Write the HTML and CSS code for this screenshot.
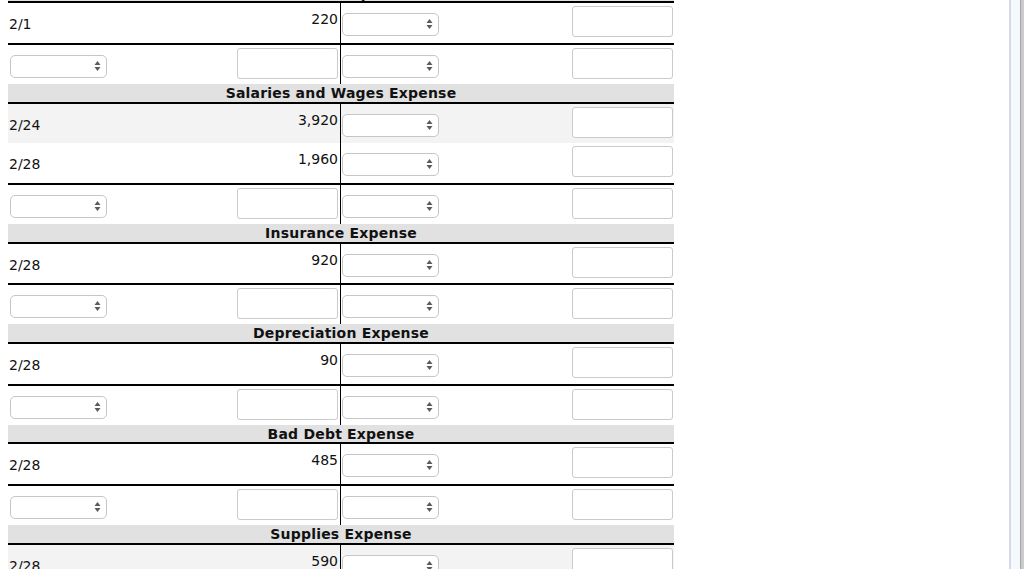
FILE: index.html
```html
<!DOCTYPE html>
<html lang="en">
<head>
<meta charset="utf-8">
<title>Ledger</title>
<link rel="stylesheet" href="styles.css">
</head>
<body>
<div class="page">
  <div class="content">
    <div class="ledger">

      <div class="acct">
        <div class="acct-title">Utilities Expense</div>
        <div class="row entry">
          <div class="date">2/1</div>
          <div class="amt">220</div>
          <div class="side"><span class="sel"><select aria-label="side"></select><svg viewBox="0 0 7 10"><path d="M0.5 4 L3.5 0 L6.5 4 Z M0.5 6 L3.5 10 L6.5 6 Z"/></svg></span></div>
          <div class="val"><input type="text" aria-label="value"></div>
        </div>
        <div class="row total">
          <div class="tsel"><span class="sel"><select aria-label="date"></select><svg viewBox="0 0 7 10"><path d="M0.5 4 L3.5 0 L6.5 4 Z M0.5 6 L3.5 10 L6.5 6 Z"/></svg></span></div>
          <div class="tin"><input type="text" aria-label="amount"></div>
          <div class="side"><span class="sel"><select aria-label="side"></select><svg viewBox="0 0 7 10"><path d="M0.5 4 L3.5 0 L6.5 4 Z M0.5 6 L3.5 10 L6.5 6 Z"/></svg></span></div>
          <div class="val"><input type="text" aria-label="value"></div>
        </div>
      </div>

      <div class="acct">
        <div class="acct-title">Salaries and Wages Expense</div>
        <div class="row entry shaded">
          <div class="date">2/24</div>
          <div class="amt">3,920</div>
          <div class="side"><span class="sel"><select aria-label="side"></select><svg viewBox="0 0 7 10"><path d="M0.5 4 L3.5 0 L6.5 4 Z M0.5 6 L3.5 10 L6.5 6 Z"/></svg></span></div>
          <div class="val"><input type="text" aria-label="value"></div>
        </div>
        <div class="row entry">
          <div class="date">2/28</div>
          <div class="amt">1,960</div>
          <div class="side"><span class="sel"><select aria-label="side"></select><svg viewBox="0 0 7 10"><path d="M0.5 4 L3.5 0 L6.5 4 Z M0.5 6 L3.5 10 L6.5 6 Z"/></svg></span></div>
          <div class="val"><input type="text" aria-label="value"></div>
        </div>
        <div class="row total">
          <div class="tsel"><span class="sel"><select aria-label="date"></select><svg viewBox="0 0 7 10"><path d="M0.5 4 L3.5 0 L6.5 4 Z M0.5 6 L3.5 10 L6.5 6 Z"/></svg></span></div>
          <div class="tin"><input type="text" aria-label="amount"></div>
          <div class="side"><span class="sel"><select aria-label="side"></select><svg viewBox="0 0 7 10"><path d="M0.5 4 L3.5 0 L6.5 4 Z M0.5 6 L3.5 10 L6.5 6 Z"/></svg></span></div>
          <div class="val"><input type="text" aria-label="value"></div>
        </div>
      </div>

      <div class="acct">
        <div class="acct-title">Insurance Expense</div>
        <div class="row entry">
          <div class="date">2/28</div>
          <div class="amt">920</div>
          <div class="side"><span class="sel"><select aria-label="side"></select><svg viewBox="0 0 7 10"><path d="M0.5 4 L3.5 0 L6.5 4 Z M0.5 6 L3.5 10 L6.5 6 Z"/></svg></span></div>
          <div class="val"><input type="text" aria-label="value"></div>
        </div>
        <div class="row total">
          <div class="tsel"><span class="sel"><select aria-label="date"></select><svg viewBox="0 0 7 10"><path d="M0.5 4 L3.5 0 L6.5 4 Z M0.5 6 L3.5 10 L6.5 6 Z"/></svg></span></div>
          <div class="tin"><input type="text" aria-label="amount"></div>
          <div class="side"><span class="sel"><select aria-label="side"></select><svg viewBox="0 0 7 10"><path d="M0.5 4 L3.5 0 L6.5 4 Z M0.5 6 L3.5 10 L6.5 6 Z"/></svg></span></div>
          <div class="val"><input type="text" aria-label="value"></div>
        </div>
      </div>

      <div class="acct">
        <div class="acct-title">Depreciation Expense</div>
        <div class="row entry">
          <div class="date">2/28</div>
          <div class="amt">90</div>
          <div class="side"><span class="sel"><select aria-label="side"></select><svg viewBox="0 0 7 10"><path d="M0.5 4 L3.5 0 L6.5 4 Z M0.5 6 L3.5 10 L6.5 6 Z"/></svg></span></div>
          <div class="val"><input type="text" aria-label="value"></div>
        </div>
        <div class="row total">
          <div class="tsel"><span class="sel"><select aria-label="date"></select><svg viewBox="0 0 7 10"><path d="M0.5 4 L3.5 0 L6.5 4 Z M0.5 6 L3.5 10 L6.5 6 Z"/></svg></span></div>
          <div class="tin"><input type="text" aria-label="amount"></div>
          <div class="side"><span class="sel"><select aria-label="side"></select><svg viewBox="0 0 7 10"><path d="M0.5 4 L3.5 0 L6.5 4 Z M0.5 6 L3.5 10 L6.5 6 Z"/></svg></span></div>
          <div class="val"><input type="text" aria-label="value"></div>
        </div>
      </div>

      <div class="acct">
        <div class="acct-title">Bad Debt Expense</div>
        <div class="row entry">
          <div class="date">2/28</div>
          <div class="amt">485</div>
          <div class="side"><span class="sel"><select aria-label="side"></select><svg viewBox="0 0 7 10"><path d="M0.5 4 L3.5 0 L6.5 4 Z M0.5 6 L3.5 10 L6.5 6 Z"/></svg></span></div>
          <div class="val"><input type="text" aria-label="value"></div>
        </div>
        <div class="row total">
          <div class="tsel"><span class="sel"><select aria-label="date"></select><svg viewBox="0 0 7 10"><path d="M0.5 4 L3.5 0 L6.5 4 Z M0.5 6 L3.5 10 L6.5 6 Z"/></svg></span></div>
          <div class="tin"><input type="text" aria-label="amount"></div>
          <div class="side"><span class="sel"><select aria-label="side"></select><svg viewBox="0 0 7 10"><path d="M0.5 4 L3.5 0 L6.5 4 Z M0.5 6 L3.5 10 L6.5 6 Z"/></svg></span></div>
          <div class="val"><input type="text" aria-label="value"></div>
        </div>
      </div>

      <div class="acct">
        <div class="acct-title">Supplies Expense</div>
        <div class="row entry shaded">
          <div class="date">2/28</div>
          <div class="amt">590</div>
          <div class="side"><span class="sel"><select aria-label="side"></select><svg viewBox="0 0 7 10"><path d="M0.5 4 L3.5 0 L6.5 4 Z M0.5 6 L3.5 10 L6.5 6 Z"/></svg></span></div>
          <div class="val"><input type="text" aria-label="value"></div>
        </div>
        <div class="row total">
          <div class="tsel"><span class="sel"><select aria-label="date"></select><svg viewBox="0 0 7 10"><path d="M0.5 4 L3.5 0 L6.5 4 Z M0.5 6 L3.5 10 L6.5 6 Z"/></svg></span></div>
          <div class="tin"><input type="text" aria-label="amount"></div>
          <div class="side"><span class="sel"><select aria-label="side"></select><svg viewBox="0 0 7 10"><path d="M0.5 4 L3.5 0 L6.5 4 Z M0.5 6 L3.5 10 L6.5 6 Z"/></svg></span></div>
          <div class="val"><input type="text" aria-label="value"></div>
        </div>
      </div>

    </div>
  </div>
  <div class="scrollbar"></div>
</div>
</body>
</html>
```

FILE: styles.css
```css
html, body {
  margin: 0;
  padding: 0;
  height: 100%;
  overflow: hidden;
  background: #fff;
}

body {
  font-family: "DejaVu Sans", Verdana, sans-serif;
  font-size: 14px;
  color: #111;
}

.page {
  display: flex;
  height: 100vh;
}

.content {
  flex: 1;
  overflow: hidden;
  padding-left: 8px;
}

.ledger {
  width: 666px;
  margin-top: -16.34px;
}

.acct-title {
  height: 17.67px;
  line-height: 18px;
  background: #e1e1e1;
  font-weight: bold;
  text-align: center;
  letter-spacing: 0.2px;
  border-bottom: 2px solid #000;
  overflow: visible;
}

.row {
  display: grid;
  grid-template-columns: 229px 104px 231px 102px;
  align-items: start;
}

.row > :nth-child(2) {
  border-right: 1px solid #000;
  align-self: stretch;
}

.entry {
  height: 39.67px;
}

.total {
  height: 39px;
  border-top: 2px solid #000;
}

.shaded {
  background: #f3f3f3;
}

.date {
  padding-top: 13px;
  padding-left: 1px;
  line-height: 16px;
}

.amt {
  padding-top: 8px;
  padding-right: 2px;
  line-height: 16px;
  text-align: right;
}

.sel {
  position: relative;
  display: block;
  width: 97px;
  height: 23px;
  margin-top: 10px;
}

.tsel .sel {
  margin-left: 2px;
}

.side .sel {
  margin-left: 1px;
}

.sel select {
  -webkit-appearance: none;
  appearance: none;
  display: block;
  width: 100%;
  height: 100%;
  margin: 0;
  padding: 0 4px;
  box-sizing: border-box;
  border: 1px solid #c6c6c6;
  border-radius: 5px;
  background: #fff;
  font: inherit;
}

.sel svg {
  position: absolute;
  right: 6px;
  top: 6px;
  width: 7px;
  height: 10px;
  fill: #5a5a5a;
  pointer-events: none;
}

.tin input,
.val input {
  display: block;
  width: 101px;
  height: 31px;
  margin: 3px 0 0 0;
  padding: 0 4px;
  box-sizing: border-box;
  border: 1px solid #cacaca;
  border-radius: 3px;
  background: #fff;
  font: inherit;
}

.scrollbar {
  flex: none;
  width: 15px;
  box-sizing: border-box;
  border-left: 2px solid #d7d9e4;
  background: linear-gradient(to right, #f5f8fc 0, #f5f8fc 9px, #a9a9a9 9px, #a9a9a9 10px, #c6c6c6 10px, #d0d0d0 13px);
}
```
